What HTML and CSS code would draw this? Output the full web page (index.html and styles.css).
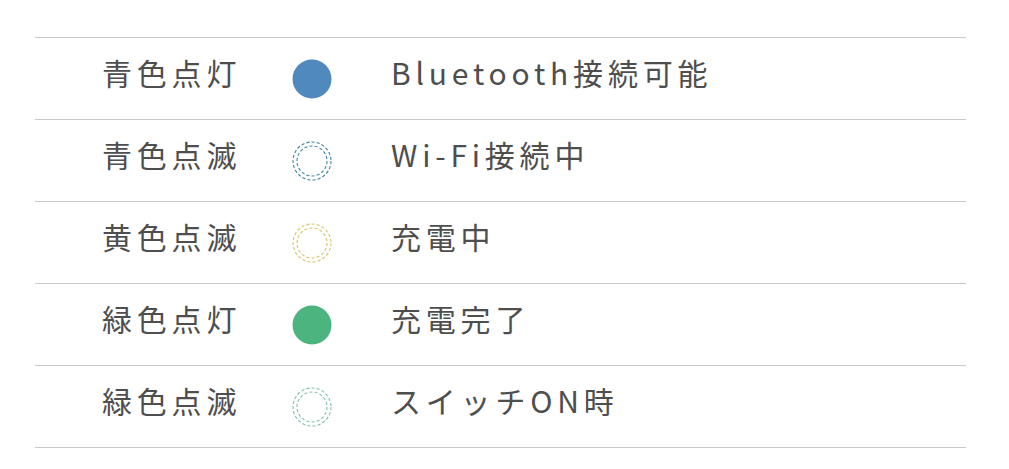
FILE: index.html
```html
<!DOCTYPE html>
<html lang="ja">
<head>
<meta charset="utf-8">
<link rel="stylesheet" href="styles.css">
</head>
<body>
<div class="table">
  <div class="row">
    <span class="label">青色点灯</span>
    <span class="dot"><svg width="40" height="40" viewBox="0 0 40 40"><circle cx="20" cy="20" r="19.5" fill="#4f89bd"/></svg></span>
    <span class="desc">Bluetooth接続可能</span>
  </div>
  <div class="row">
    <span class="label">青色点滅</span>
    <span class="dot"><svg width="40" height="40" viewBox="0 0 40 40"><circle cx="20" cy="20" r="19" class="ring blue"/><circle cx="20" cy="20" r="15" class="ring blue"/></svg></span>
    <span class="desc">Wi-Fi接続中</span>
  </div>
  <div class="row">
    <span class="label">黄色点滅</span>
    <span class="dot"><svg width="40" height="40" viewBox="0 0 40 40"><circle cx="20" cy="20" r="19" class="ring yellow"/><circle cx="20" cy="20" r="15" class="ring yellow"/></svg></span>
    <span class="desc">充電中</span>
  </div>
  <div class="row">
    <span class="label">緑色点灯</span>
    <span class="dot"><svg width="40" height="40" viewBox="0 0 40 40"><circle cx="20" cy="20" r="19.5" fill="#4bb47f"/></svg></span>
    <span class="desc">充電完了</span>
  </div>
  <div class="row">
    <span class="label">緑色点滅</span>
    <span class="dot"><svg width="40" height="40" viewBox="0 0 40 40"><circle cx="20" cy="20" r="19" class="ring green"/><circle cx="20" cy="20" r="15" class="ring green"/></svg></span>
    <span class="desc">スイッチON時</span>
  </div>
</div>
</body>
</html>
```
FILE: styles.css
```css
html, body {
  margin: 0;
  padding: 0;
  background: #ffffff;
}
body {
  font-family: "Noto Sans CJK JP", "Noto Sans", sans-serif;
  color: #4e4e4e;
}
.table {
  margin: 37px 0 0 35px;
  width: 931px;
  border-top: 1px solid #c9c9c9;
}
.row {
  display: grid;
  grid-template-columns: 257px 99px 1fr;
  align-items: center;
  height: 81px;
  border-bottom: 1px solid #c9c9c9;
}
.label, .desc {
  font-size: 30px;
  font-weight: 400;
  letter-spacing: 4.8px;
  line-height: 1;
  padding-bottom: 13px;
  white-space: nowrap;
}
.label {
  padding-left: 67px;
}
.dot {
  display: flex;
  align-items: center;
}
.dot svg {
  display: block;
}
.ring {
  fill: none;
  stroke-width: 1.1;
  stroke-dasharray: 3.2 2;
}
.ring.blue { stroke: #3f86a0; }
.ring.yellow { stroke: #d8c468; }
.ring.green { stroke: #7fc2aa; }
```
